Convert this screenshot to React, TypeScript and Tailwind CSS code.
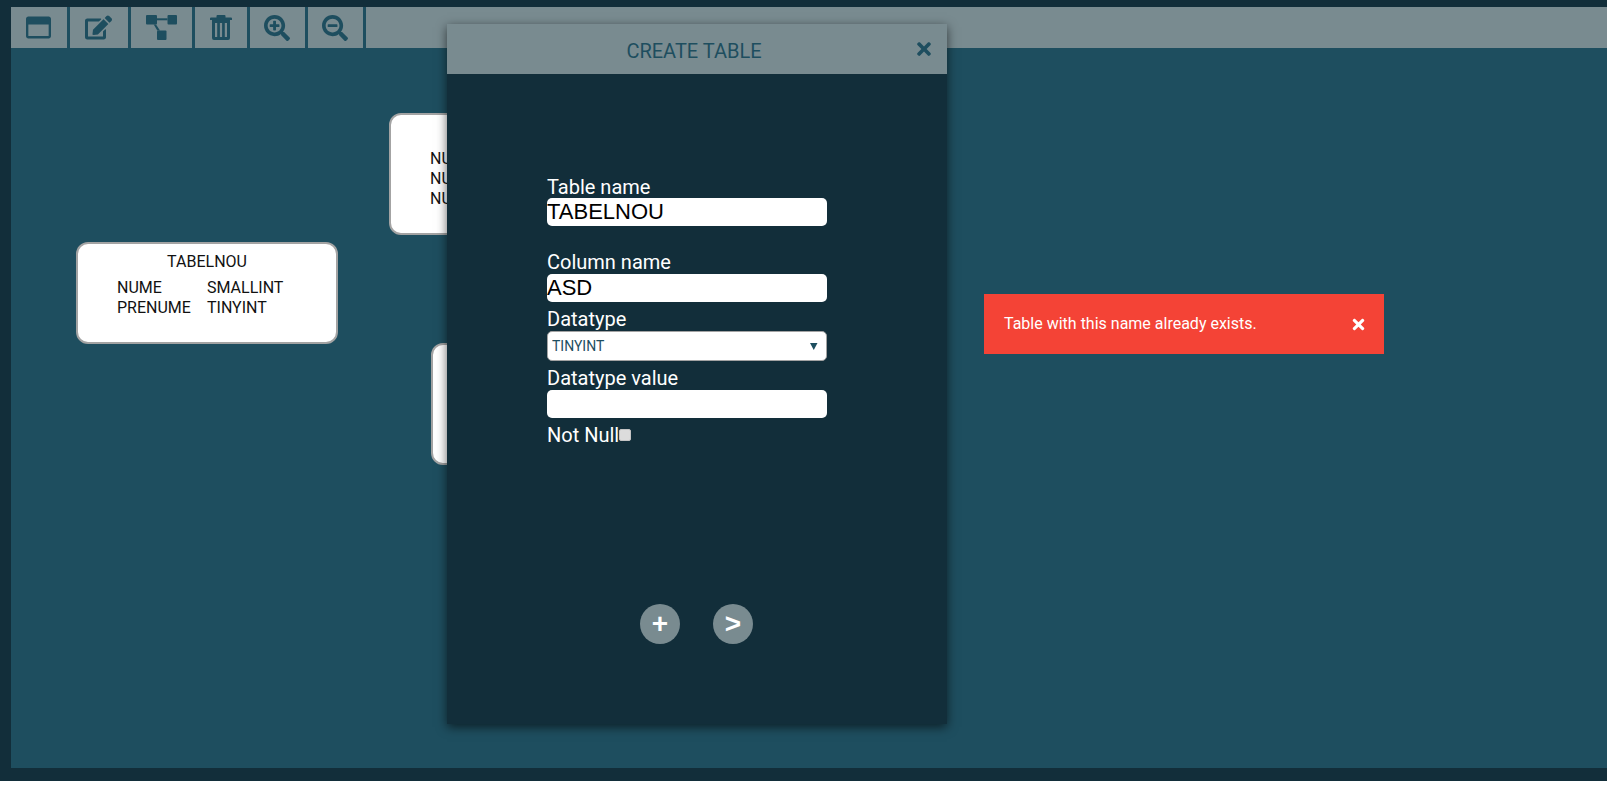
import { FaRegWindowMaximize, FaEdit, FaSearchPlus, FaSearchMinus, FaTimes } from "react-icons/fa";

function TrashIcon({ className }: { className?: string }) {
  return (
    <svg className={className} width="22" height="25" viewBox="0 0 22 25" fill="currentColor">
      <path d="M7.500 0h7a1 1 0 0 1 1 1v1.500H21a1 1 0 0 1 1 1V5H0V3.500a1 1 0 0 1 1-1h5.500V1a1 1 0 0 1 1-1z" />
      <path
        fillRule="evenodd"
        d="M2 5h18v18a2 2 0 0 1-2 2H4a2 2 0 0 1-2-2zM5 8v14h2.200V8zM9.900 8v14h2.200V8zM14.800 8v14H17V8z"
      />
    </svg>
  );
}

function DiagramIcon({ className }: { className?: string }) {
  return (
    <svg className={className} width="31" height="25" viewBox="0 0 31 25" fill="currentColor">
      <rect x="0" y="0" width="11" height="9.500" rx="1" />
      <rect x="21.500" y="0" width="9.500" height="9.500" rx="1" />
      <rect x="11" y="15.500" width="9.500" height="9.500" rx="1" />
      <path d="M11 3.300h10.500v2H11z" />
      <path d="M7.700 9.500h2.300l4 6h-2.700z" />
    </svg>
  );
}

const tools = [
  { Icon: FaRegWindowMaximize, w: "w-[55px] pr-[1px]", s: "text-[25px]" },
  { Icon: FaEdit, w: "w-[57px] pr-[1px]", s: "text-[27px]" },
  { Icon: DiagramIcon, w: "w-[61px]", s: "" },
  { Icon: TrashIcon, w: "w-[52px]", s: "" },
  { Icon: FaSearchPlus, w: "w-[53px] pr-[2px]", s: "text-[26px]" },
  { Icon: FaSearchMinus, w: "w-[53px] pr-[2px]", s: "text-[26px]" },
];

function TableNode({ className, title, rows }: { className: string; title?: string; rows: [string, string][] }) {
  return (
    <div className={"absolute bg-white border-2 border-[#a3a3a3] rounded-[12px] text-[16px] leading-[20px] text-[#111] " + className}>
      <div className="h-[20px] mt-[8px] text-center">{title}</div>
      <div className="mt-[6px] pl-[39px] flex flex-col">
        {rows.map(([a, b], i) => (
          <div key={i} className="flex">
            <span className="w-[90px]">{a}</span>
            <span>{b}</span>
          </div>
        ))}
      </div>
    </div>
  );
}

const inputCls = "block w-[280px] h-[28px] bg-white rounded-[5px] text-black text-[22px] leading-[28px] font-['Liberation_Sans',sans-serif] outline-none";
const labelCls = "block h-[21px] text-[20px] leading-[21px] text-white";
const roundBtn = "w-[40px] h-[40px] rounded-full bg-[#798b90] text-white text-[28px] font-bold font-['Liberation_Sans',sans-serif] leading-[38px]";

export default function App() {
  return (
    <div className="relative h-[781px] w-full overflow-hidden bg-[#122e3a] pl-[11px] pt-[7px] pb-[13px] font-['Roboto',sans-serif] flex flex-col">
      <div className="flex h-[41px] shrink-0 bg-[#798b90]">
        {tools.map(({ Icon, w, s }, i) => (
          <div key={i} className={"flex items-center justify-center border-r-[3px] border-[#1e4e5f] box-content " + w}>
            <Icon className={"text-[#1e4e5f] " + s} />
          </div>
        ))}
      </div>
      <div className="relative flex-1 bg-[#1e4e5f]">
        <TableNode
          className="left-[65px] top-[194px] w-[262px] h-[102px]"
          title="TABELNOU"
          rows={[["NUME", "SMALLINT"], ["PRENUME", "TINYINT"]]}
        />
        <TableNode
          className="left-[378px] top-[65px] w-[262px] h-[122px]"
          rows={[["NUME", "INT"], ["NUME", "INT"], ["NUME", "INT"]]}
        />
        <TableNode className="left-[420px] top-[295px] w-[262px] h-[122px]" rows={[]} />
      </div>

      <div className="absolute left-[447px] top-[24px] w-[500px] h-[700px] bg-[#122e3a] shadow-[0_3px_10px_rgba(0,0,0,0.6)] flex flex-col">
        <div className="relative h-[50px] shrink-0 bg-[#798b90] flex items-center justify-center text-[#1e4e5f] text-[20px]">
          <span className="mt-[4px] mr-[6px]">CREATE TABLE</span>
          <FaTimes className="absolute right-[13px] top-[15px] text-[20px]" />
        </div>
        <div className="flex-1 flex flex-col pt-[103px] pl-[100px]">
          <label className={labelCls}>Table name</label>
          <input className={inputCls} defaultValue="TABELNOU" />
          <label className={labelCls + " mt-[26px] mb-[1px]"}>Column name</label>
          <input className={inputCls} defaultValue="ASD" />
          <label className={labelCls + " mt-[7px] mb-[1px]"}>Datatype</label>
          <div className="relative w-[280px] h-[30px]">
            <select className="block appearance-none w-full h-full bg-white border border-[#a3a3a3] rounded-[5px] pl-[4px] text-[14px] text-[#1e4e5f] outline-none" defaultValue="TINYINT">
              <option>TINYINT</option>
              <option>SMALLINT</option>
              <option>INT</option>
            </select>
            <svg className="absolute right-[9px] top-[12px] pointer-events-none" width="8" height="7" viewBox="0 0 8 7">
              <path d="M0 0h7.500L3.750 7z" fill="#1e4e5f" />
            </svg>
          </div>
          <label className={labelCls + " mt-[7px] mb-[1px]"}>Datatype value</label>
          <input className={inputCls} />
          <div className="flex items-center mt-[7px]">
            <label className={labelCls}>Not Null</label>
            <input type="checkbox" className="appearance-none block w-[12px] h-[12px] -mt-[1px] bg-[#dcdcdc] border border-[#c4c4c4] rounded-[2px]" />
          </div>
          <div className="flex mt-[158px] ml-[93px] gap-[33px]">
            <button className={roundBtn}>+</button>
            <button className={roundBtn}>&gt;</button>
          </div>
        </div>
      </div>

      <div className="absolute left-[984px] top-[294px] w-[400px] h-[60px] bg-[#f44336] flex items-center justify-between pl-[20px] pr-[17px] text-white text-[16px]">
        <span className="-mt-[1px]">Table with this name already exists.</span>
        <FaTimes className="text-[17px]" />
      </div>
    </div>
  );
}
